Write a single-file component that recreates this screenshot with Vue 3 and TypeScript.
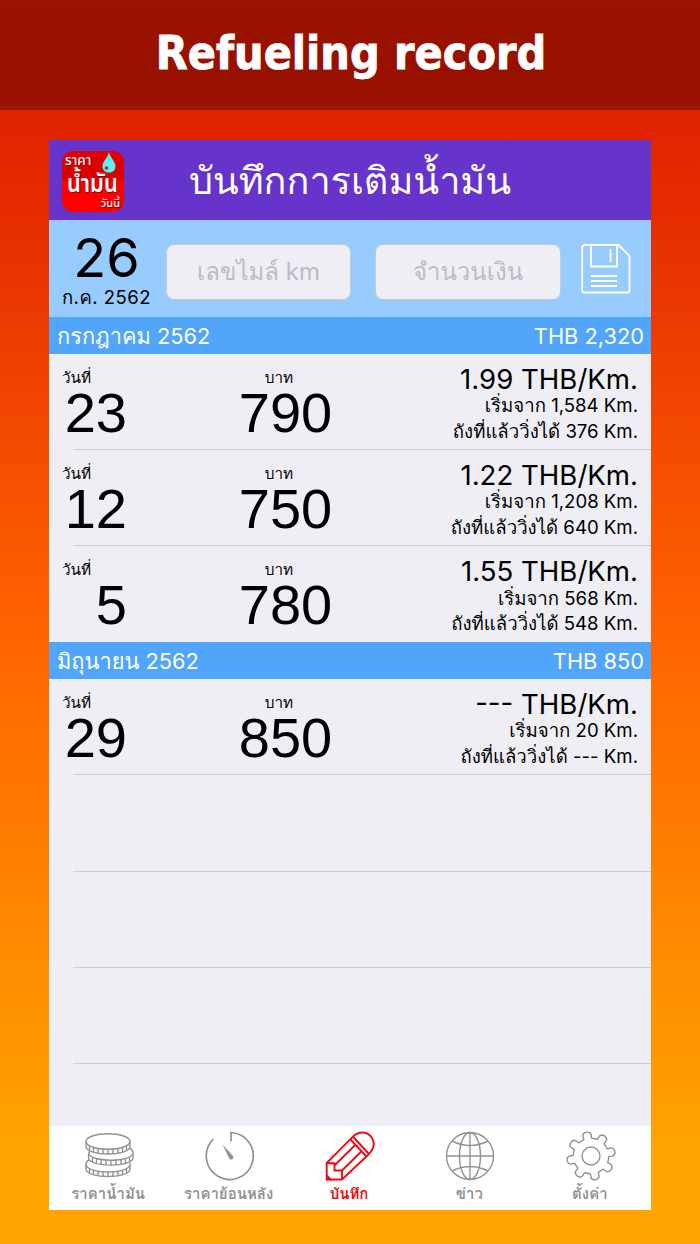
<script setup lang="ts">
interface Refuel {
  day: string
  amount: string
  rate: string
  start: string
  distance: string
}
interface Month {
  name: string
  total: string
  records: Refuel[]
}

const months: Month[] = [
  {
    name: 'กรกฎาคม 2562',
    total: 'THB 2,320',
    records: [
      { day: '23', amount: '790', rate: '1.99', start: '1,584', distance: '376' },
      { day: '12', amount: '750', rate: '1.22', start: '1,208', distance: '640' },
      { day: '5', amount: '780', rate: '1.55', start: '568', distance: '548' },
    ],
  },
  {
    name: 'มิถุนายน 2562',
    total: 'THB 850',
    records: [{ day: '29', amount: '850', rate: '---', start: '20', distance: '---' }],
  },
]

const tabs = [
  { id: 'coins', label: 'ราคาน้ำมัน' },
  { id: 'timer', label: 'ราคาย้อนหลัง' },
  { id: 'pencil', label: 'บันทึก' },
  { id: 'globe', label: 'ข่าว' },
  { id: 'gear', label: 'ตั้งค่า' },
]

function polar(deg: number, r: number): string {
  const a = (deg * Math.PI) / 180
  return `${(25 + r * Math.cos(a)).toFixed(2)} ${(25 + r * Math.sin(a)).toFixed(2)}`
}

// Eight rounded teeth around the hub
function gearPath(): string {
  let d = ''
  for (let i = 0; i < 8; i++) {
    const a = -101 + i * 45
    d += `${i ? 'L' : 'M'}${polar(a - 17, 17.8)} Q${polar(a - 12.5, 17.2)} ${polar(a - 12, 19)} `
    d += `L${polar(a - 11.5, 21)} Q${polar(a - 10, 24.3)} ${polar(a, 24.3)} `
    d += `Q${polar(a + 10, 24.3)} ${polar(a + 11.5, 21)} L${polar(a + 12, 19)} `
    d += `Q${polar(a + 12.5, 17.2)} ${polar(a + 17, 17.8)} `
  }
  return d + 'Z'
}
const gear = gearPath()
</script>

<template>
  <div class="page">
    <header class="banner"><h1>Refueling record</h1></header>
    <main class="phone">
      <div class="navbar">
        <div class="logo">
          <span class="logo-a">ราคา</span>
          <span class="logo-b">น้ำมัน</span>
          <span class="logo-c">วันนี้</span>
          <svg class="drop" viewBox="0 0 14 21">
            <path d="M7 0C8 6 13.5 9 13.5 14.5A6.5 6.2 0 0 1 .5 14.5C.5 9 6 6 7 0Z" fill="#5ff0f5" />
            <circle cx="4.5" cy="16" r="1.8" fill="#a02830" />
          </svg>
        </div>
        <div class="title">บันทึกการเติมน้ำมัน</div>
      </div>

      <div class="entry">
        <div class="date">
          <div class="date-day">26</div>
          <div class="date-month">ก.ค. 2562</div>
        </div>
        <div class="field">เลขไมล์ km</div>
        <div class="field field-b">จำนวนเงิน</div>
        <svg class="save" viewBox="0 0 50 50" fill="none" stroke="#fff" stroke-width="1.8">
          <path d="M4 1H37.500L48.500 12V46.500Q48.500 48.500 46.500 48.500H3.200Q1.200 48.500 1.200 46.500V3.500Q1.200 1 4 1Z" />
          <path d="M10 1V22.500H36V1M29.500 5V18M10 32H36M10 37H36M10 42H36" />
        </svg>
      </div>

      <section v-for="m in months" :key="m.name">
        <div class="month"><span>{{ m.name }}</span><span class="total">{{ m.total }}</span></div>
        <div v-for="r in m.records" :key="r.day" class="row">
          <div class="day"><div class="cap">วันที่</div><div class="num">{{ r.day }}</div></div>
          <div class="baht"><div class="cap">บาท</div><div class="num">{{ r.amount }}</div></div>
          <div class="detail">
            <div class="rate">{{ r.rate }} THB/Km.</div>
            <div class="line">เริ่มจาก {{ r.start }} Km.</div>
            <div class="line">ถังที่แล้ววิ่งได้ {{ r.distance }} Km.</div>
          </div>
        </div>
      </section>
      <div v-for="n in 3" :key="n" class="row"></div>

      <nav class="tabs">
        <div v-for="t in tabs" :key="t.id" class="tab" :class="{ active: t.id === 'pencil' }">
          <svg viewBox="0 0 50 50" fill="none" stroke="currentColor" stroke-width="1.4">
            <template v-if="t.id === 'coins'">
              <ellipse cx="24" cy="10.500" rx="22" ry="7.800" />
              <path d="M2 10.500V15.500C2.500 25.500 45.500 25.500 46 15.500V10.500M5.500 15V20M9.500 17V21.500M14 18V22.500M19 18.500V23M24 18.500V23M29 18.500V23M34 18V22.500M38.500 17V21.500M42.500 15V20" />
              <path d="M5.500 20.500Q4.500 22 4.500 27C5 36.500 48.500 36.500 49 27V21.500Q48.500 18.500 45.500 17.500M4.800 23C9 31.500 48 31.500 49 22M8.500 26.500V31M12.500 28V32.500M17 29V33.500M22 29.500V34M27 29.500V34M32 29V33.500M37 28.500V33M41.500 27.500V32M45.500 25.500V30" />
              <path d="M5 29Q2 30.500 2 33.500V38C2.500 48 45.500 48 46 38V32M2 33.500C3 43.500 45 43.500 46 33.500M5.500 38V42.500M9.500 39.500V44M14 40.500V45M19 41V45.500M24 41V45.500M29 41V45.500M34 40.500V45M38.500 39.500V44M42.500 38V42.500" />
            </template>
            <template v-else-if="t.id === 'timer'">
              <path d="M8.300 8.200A23.500 23.500 0 1 0 26 1.500V10.500" stroke-width="1.700" />
              <path d="M17.500 13.500L28 25A2.200 2.200 0 1 1 24.200 27.200Z" fill="currentColor" stroke="none" />
            </template>
            <template v-else-if="t.id === 'pencil'">
              <g stroke-width="1.900">
                <path d="M1.700 32L27.200 6.300C34-1 43 .5 47 7C50.500 13 48.500 19 42.500 24.500L17 48.500H1.700Z" />
                <path d="M25.500 8.500L41 25M28.300 6L43.500 22.500M30.700 13.500L9.500 34.500M36.800 20L17 39.500M1.700 32L9.500 32.500V39.500L17 39.500V48.500" />
              </g>
              <path d="M1.700 44L6 48.500H1.700Z" fill="currentColor" />
            </template>
            <template v-else-if="t.id === 'globe'">
              <circle cx="25" cy="25" r="23.500" />
              <ellipse cx="25" cy="25" rx="10.500" ry="23.500" />
              <path d="M25 1.500V48.500M1.500 25H48.500M7 10Q25 19 43 10M7 40Q25 31 43 40" />
            </template>
            <template v-else>
              <path :d="gear" />
              <circle cx="25" cy="25" r="9" />
            </template>
          </svg>
          <span>{{ t.label }}</span>
        </div>
      </nav>
    </main>
  </div>
</template>

<style>
body { margin: 0; }
</style>

<style scoped>
.page {
  width: 700px;
  height: 1244px;
  overflow: hidden;
  background: linear-gradient(#dd1800 0, #e02200 110px, #e63000 240px, #ff6200 620px, #ffa400 1150px, #ffa400 1244px);
  font-family: Inter, Loma, "Noto Sans Thai Looped", sans-serif;
}
.banner {
  box-sizing: border-box;
  height: 110px;
  padding-top: 23px;
  background: linear-gradient(#9a1300 0, #971000 104px, #9a1900 106px);
  text-align: center;
}
h1 {
  margin: 0 0 0 2px;
  font: bold 46.200px/60px "DejaVu Sans Condensed", sans-serif;
  color: #fff;
  -webkit-text-stroke: .8px #fff;
  white-space: nowrap;
}
.phone {
  display: flex;
  flex-direction: column;
  width: 602px;
  height: 1070px;
  margin: 30px 0 0 49px;
  background: #efeef4;
}
.navbar { display: flex; height: 80px; background: #6633cb; }
.logo {
  position: relative;
  width: 62px;
  height: 61px;
  margin: 11px 0 0 13px;
  border-radius: 11px;
  background: linear-gradient(#e30000, #d80000 45%, #ff0000 50%);
  color: #fff;
  font-family: "Noto Sans Thai", sans-serif;
  flex: none;
}
.logo span { position: absolute; line-height: 20px; white-space: nowrap; text-shadow: 1px 1px 1px #700; }
.logo-a { left: 3px; top: 0; font-size: 13.500px; font-weight: 500; }
.logo-b { left: 5px; top: 24px; font-size: 24.500px; font-weight: 600; transform: scaleX(.89); transform-origin: left; }
.logo-c { right: 4px; top: 43px; font-size: 11px; font-weight: 500; }
.drop { position: absolute; left: 40px; top: 1px; width: 14px; height: 21px; }
.title { width: 454px; margin-left: -1px; text-align: center; color: #fff; font-size: 37.800px; line-height: 80px; white-space: nowrap; }
.entry { display: flex; height: 97px; background: #98cbfe; }
.date { width: 117px; text-align: center; flex: none; }
.date-day { margin: 12px 2px 0 0; font-size: 54px; line-height: 52px; }
.date-month { margin-right: 2px; font-size: 18.500px; line-height: 27px; letter-spacing: .5px; white-space: nowrap; }
.field {
  box-sizing: border-box;
  width: 185px;
  height: 56px;
  margin-top: 24px;
  border: 1px solid #c4cad8;
  border-radius: 8px;
  background: #efeef4;
  color: #bcbcc3;
  font-size: 24px;
  line-height: 54px;
  text-align: center;
  white-space: nowrap;
  flex: none;
}
.field-b { margin-left: 24px; width: 186px; }
.save { width: 50px; height: 50px; margin: 24px 0 0 20px; }
.month {
  display: flex;
  justify-content: space-between;
  height: 36.500px;
  padding: 0 7px 0 8px;
  background: #51a5fa;
  color: #fff;
  font-size: 21.800px;
  line-height: 39px;
}
.row { position: relative; display: flex; height: 96.300px; flex: none; }
.row::after {
  content: "";
  position: absolute;
  right: 0;
  bottom: -.3px;
  left: 24px;
  height: 1px;
  background: #cfced3;
}
section:first-of-type .row:last-child::after { display: none; }
.day { box-sizing: border-box; width: 78px; padding-left: 13px; }
.day .num { text-align: right; }
.baht { width: 150px; margin-left: 83.500px; text-align: center; }
.baht .cap { margin-left: -13px; }
.cap { margin-top: 12px; font-size: 15.300px; line-height: 24px; height: 19px; white-space: nowrap; }
.num { font: 56px/56px "Liberation Sans", sans-serif; color: #000; }
.detail { margin-left: auto; padding: 9px 13px 0 0; text-align: right; white-space: nowrap; }
.rate { height: 30.500px; font-size: 27.600px; line-height: 33px; }
.line { font-size: 18.600px; line-height: 25.500px; height: 25.500px; }
.tabs { display: flex; height: 84px; margin-top: auto; background: #fff; }
.tab { display: flex; flex: 1; flex-direction: column; align-items: center; color: #929292; }
.tab svg { width: 50px; height: 50px; margin: 5px 0 0; flex: none; }
.tab span { margin-right: 2px; font-size: 15px; line-height: 25px; white-space: nowrap; font-weight: 600; }
.active { color: #ed0c10; }
</style>
